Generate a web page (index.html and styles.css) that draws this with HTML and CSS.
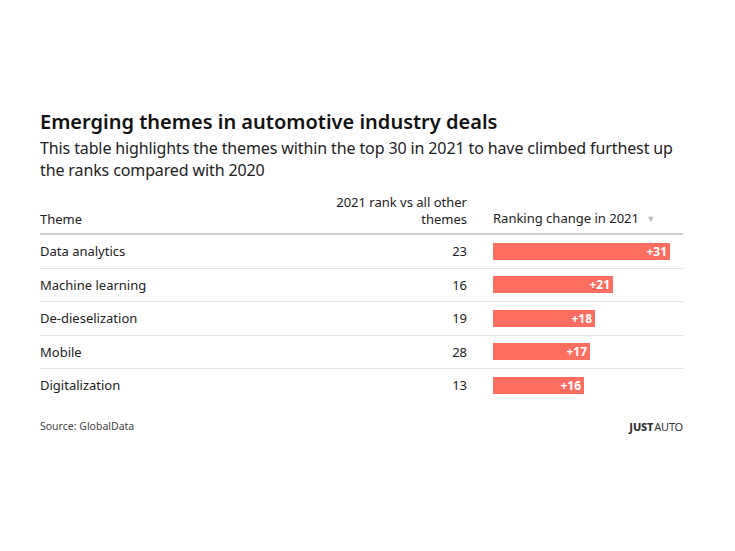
FILE: index.html
```html
<!DOCTYPE html>
<html>
<head>
<meta charset="utf-8">
<link rel="stylesheet" href="styles.css">
</head>
<body>
<div class="chart">
  <h1 class="title">Emerging themes in automotive industry deals</h1>
  <p class="subtitle">This table highlights the themes within the top 30 in 2021 to have climbed furthest up the ranks compared with 2020</p>
  <table class="tbl">
    <thead>
      <tr>
        <th class="c-theme">Theme</th>
        <th class="c-rank">2021 rank vs all other<br>themes</th>
        <th class="c-change">Ranking change in 2021 <span class="sort">&#9660;</span></th>
      </tr>
    </thead>
    <tbody>
      <tr><td class="c-theme">Data analytics</td><td class="c-rank">23</td><td class="c-change"><div class="bar" style="width:177px">+31</div></td></tr>
      <tr><td class="c-theme">Machine learning</td><td class="c-rank">16</td><td class="c-change"><div class="bar" style="width:120px">+21</div></td></tr>
      <tr><td class="c-theme">De-dieselization</td><td class="c-rank">19</td><td class="c-change"><div class="bar" style="width:102px">+18</div></td></tr>
      <tr><td class="c-theme">Mobile</td><td class="c-rank">28</td><td class="c-change"><div class="bar" style="width:97px">+17</div></td></tr>
      <tr class="last"><td class="c-theme">Digitalization</td><td class="c-rank">13</td><td class="c-change"><div class="bar" style="width:91px">+16</div></td></tr>
    </tbody>
  </table>
  <div class="footer">
    <span class="source">Source: GlobalData</span>
    <span class="logo"><b>JUST</b>AUTO</span>
  </div>
</div>
</body>
</html>
```

FILE: styles.css
```css
html, body {
  margin: 0;
  padding: 0;
  background: #fff;
}
body {
  font-family: "Noto Sans", "Open Sans", sans-serif;
  color: #222;
}
.chart {
  width: 643px;
  margin-left: 40px;
  padding-top: 107px;
}
.title {
  margin: 0;
  font-size: 20px;
  font-weight: 600;
  line-height: 30px;
  color: #121212;
}
.subtitle {
  margin: 0;
  font-size: 16px;
  line-height: 22px;
  letter-spacing: -0.12px;
  color: #222;
}
.tbl {
  width: 100%;
  border-collapse: collapse;
  margin-top: 13px;
  font-size: 13px;
}
.tbl th {
  font-weight: 400;
  text-align: left;
  vertical-align: bottom;
  padding: 0 0 5px 0;
  line-height: 17px;
  border-bottom: 2px solid #cfcfcf;
  color: #222;
}
.tbl td {
  height: 32.5px;
  padding: 0;
  border-bottom: 1px solid #e4e4e4;
  vertical-align: middle;
}
.tbl tr.last td {
  border-bottom: none;
}
.c-theme {
  width: 200px;
}
.tbl .c-rank {
  text-align: right;
  width: 227px;
  padding-right: 26px;
}
.tbl th.c-rank {
  padding-right: 26px;
}
.c-change {
  width: 190px;
}
.sort {
  color: #bbb;
  font-size: 9px;
  margin-left: 4px;
  position: relative;
  top: -1px;
}
.bar {
  height: 17px;
  background: #fd6e61;
  color: #fff;
  font-size: 12px;
  font-weight: 700;
  line-height: 17px;
  text-align: right;
  padding-right: 3px;
  box-sizing: border-box;
}
.footer {
  display: flex;
  justify-content: space-between;
  align-items: center;
  margin-top: 17px;
  font-size: 10.5px;
  color: #444;
}
.logo {
  font-size: 11px;
  color: #333;
  letter-spacing: -0.2px;
}
.logo b {
  font-weight: 800;
  margin-right: 1px;
}
```
